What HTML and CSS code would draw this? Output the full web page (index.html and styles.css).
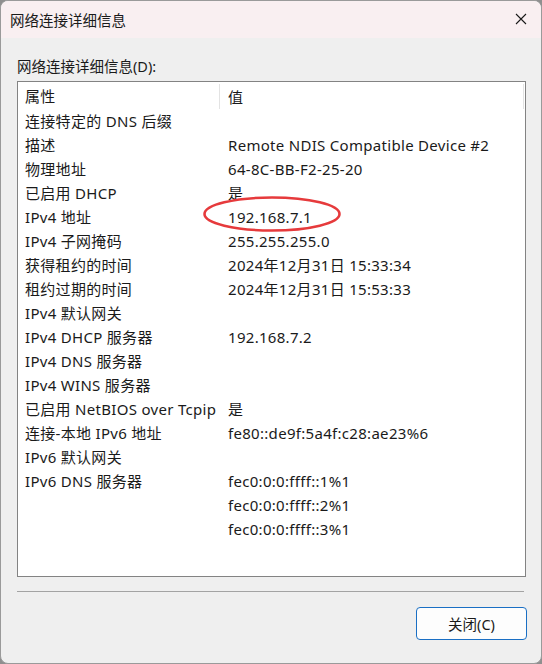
FILE: index.html
```html
<!DOCTYPE html>
<html lang="zh-CN">
<head>
	<meta charset="UTF-8">
	<title>网络连接详细信息</title>
	<link rel="stylesheet" href="styles.css">
</head>
<body>
	<div class="window">
		<div class="titlebar">
			<span class="title">网络连接详细信息</span>
			<span class="close">
				<svg width="12" height="12" viewBox="0 0 12 12"><path d="M1 1L11 11M11 1L1 11" stroke="#1a1a1a" stroke-width="1.1" fill="none"/></svg>
			</span>
		</div>
		<div class="content">
			<div class="label">网络连接详细信息(D):</div>
			<div class="listbox">
				<div class="row head">
					<div class="c1">属性</div>
					<div class="c2">值</div>
				</div>
				<div class="row"><div class="c1">连接特定的 DNS 后缀</div><div class="c2"></div></div>
				<div class="row"><div class="c1">描述</div><div class="c2">Remote NDIS Compatible Device #2</div></div>
				<div class="row"><div class="c1">物理地址</div><div class="c2">64-8C-BB-F2-25-20</div></div>
				<div class="row"><div class="c1">已启用 DHCP</div><div class="c2">是</div></div>
				<div class="row"><div class="c1">IPv4 地址</div><div class="c2">192.168.7.1</div></div>
				<div class="row"><div class="c1">IPv4 子网掩码</div><div class="c2">255.255.255.0</div></div>
				<div class="row"><div class="c1">获得租约的时间</div><div class="c2">2024年12月31日 15:33:34</div></div>
				<div class="row"><div class="c1">租约过期的时间</div><div class="c2">2024年12月31日 15:53:33</div></div>
				<div class="row"><div class="c1">IPv4 默认网关</div><div class="c2"></div></div>
				<div class="row"><div class="c1">IPv4 DHCP 服务器</div><div class="c2">192.168.7.2</div></div>
				<div class="row"><div class="c1">IPv4 DNS 服务器</div><div class="c2"></div></div>
				<div class="row"><div class="c1">IPv4 WINS 服务器</div><div class="c2"></div></div>
				<div class="row"><div class="c1">已启用 NetBIOS over Tcpip</div><div class="c2">是</div></div>
				<div class="row"><div class="c1">连接-本地 IPv6 地址</div><div class="c2">fe80::de9f:5a4f:c28:ae23%6</div></div>
				<div class="row"><div class="c1">IPv6 默认网关</div><div class="c2"></div></div>
				<div class="row"><div class="c1">IPv6 DNS 服务器</div><div class="c2">fec0:0:0:ffff::1%1</div></div>
				<div class="row"><div class="c1"></div><div class="c2">fec0:0:0:ffff::2%1</div></div>
				<div class="row"><div class="c1"></div><div class="c2">fec0:0:0:ffff::3%1</div></div>
				<svg class="mark" width="144" height="42" viewBox="0 0 144 42"><ellipse cx="72" cy="21" rx="67.5" ry="16.5" stroke="#e63a3c" stroke-width="2.6" fill="none"/></svg>
			</div>
			<div class="sep"></div>
			<div class="footer">
				<button class="btn">关闭(C)</button>
			</div>
		</div>
	</div>
</body>
</html>
```
FILE: styles.css
```css
*{
	padding:0;
	margin:0;
	box-sizing:border-box;
}
body{
	width:542px;
	height:664px;
	background:#8f8f8f;
	font-family:"Segoe UI","Noto Sans","Noto Sans CJK SC",sans-serif;
	color:#1a1a1a;
}
.window{
	width:542px;
	height:664px;
	border:1px solid #9a9a9a;
	border-radius:8px;
	background:#efefef;
	overflow:hidden;
}
.titlebar{
	height:37px;
	background:#f9eff1;
	display:flex;
	align-items:center;
	justify-content:space-between;
	padding:0 14px 1px 9px;
}
.title{
	font-size:14.5px;
}
.close{
	display:flex;
	width:12px;
	height:12px;
}
.content{
	padding:0 15px 0 16px;
}
.label{
	margin-top:17px;
	height:26px;
	line-height:22px;
	font-size:14.5px;
}
.listbox{
	position:relative;
	width:509px;
	height:496px;
	border:1px solid #838383;
	background:#fff;
	font-size:15px;
	letter-spacing:0.3px;
}
.row{
	display:flex;
	height:24px;
	line-height:24px;
	white-space:nowrap;
}
.row.head{
	height:27px;
	line-height:28px;
}
.c1{
	width:202px;
	padding-left:7px;
}
.c2{
	flex:1;
	padding-left:8px;
}
.head .c1{
	position:relative;
}
.head .c1:after{
	content:"";
	position:absolute;
	right:0;
	top:2px;
	height:25px;
	border-right:1px solid #e3e3e3;
}
.head .c2{
	border-right:1px solid #e3e3e3;
	margin:2px 1px 0 0;
	line-height:26px;
	height:25px;
}
.mark{
	position:absolute;
	left:182px;
	top:111px;
}
.sep{
	margin-top:14px;
	width:507px;
	border-top:1px solid #a3a3a3;
}
.footer{
	display:flex;
	justify-content:flex-end;
	padding-top:15px;
	width:510px;
}
.btn{
	width:111px;
	height:33px;
	border:1px solid #1a6fc4;
	border-radius:4px;
	background:#fdfdfd;
	font-family:inherit;
	font-size:14.5px;
	color:#1a1a1a;
}
```
